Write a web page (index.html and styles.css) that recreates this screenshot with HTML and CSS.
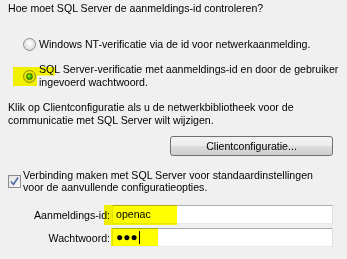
FILE: index.html
```html
<!DOCTYPE html>
<html lang="nl">

<head>
    <meta charset="UTF-8">
    <title>SQL Server aanmelding</title>
    <link rel="stylesheet" href="styles.css">
</head>

<body>

    <div class="dialog">
        <p class="question">Hoe moet SQL Server de aanmeldings-id controleren?</p>

        <div class="options">
            <label class="option">
                <span class="radio"></span>
                <span class="option-text">Windows NT-verificatie via de id voor netwerkaanmelding.</span>
            </label>
            <label class="option option-two">
                <span class="radio checked"></span>
                <span class="option-text">SQL Server-verificatie met aanmeldings-id en door de gebruiker ingevoerd wachtwoord.</span>
            </label>
        </div>

        <p class="info">Klik op Clientconfiguratie als u de netwerkbibliotheek voor de communicatie met SQL Server wilt wijzigen.</p>

        <div class="button-row">
            <button class="button">Clientconfiguratie...</button>
        </div>

        <label class="check-row">
            <span class="checkbox">
                <svg width="11" height="11" viewBox="0 0 11 11">
                    <path d="M2 5.5 L4.5 8.5 L9 1.5" fill="none" stroke="#4d6aa8" stroke-width="1.6" />
                </svg>
            </span>
            <span class="check-text">Verbinding maken met SQL Server voor standaardinstellingen voor de aanvullende configuratieopties.</span>
        </label>

        <div class="fields">
            <span class="field-label">Aanmeldings-id:</span>
            <div class="field">openac</div>
            <span class="field-label">Wachtwoord:</span>
            <div class="field password">&#9679;&#9679;&#9679;<span class="caret"></span></div>
        </div>

        <!-- highlighter marks -->
        <div class="mark mark-radio"></div>
        <div class="mark mark-login"></div>
        <div class="mark mark-password"></div>
    </div>

</body>

</html>
```

FILE: styles.css
```css
body {
    margin: 0;
    background: #f0f0f0;
    font-family: "Liberation Sans", Arial, sans-serif;
    font-size: 10.6px;
    color: #000;
}

.dialog {
    position: relative;
    width: 347px;
    height: 259px;
    box-sizing: border-box;
    padding: 2px 14px 0 8px;
}

p {
    margin: 0;
}

.question {
    line-height: 13px;
}

.options {
    margin-top: 23px;
    margin-right: -10px;
    padding-left: 15px;
}

.option {
    display: flex;
    align-items: center;
    line-height: 13px;
}

.option-two {
    margin-top: 12px;
}

.option-text {
    margin-left: 3px;
}

.radio {
    flex: none;
    width: 11px;
    height: 11px;
    border: 1px solid #8c8c8c;
    border-radius: 50%;
    background: radial-gradient(circle at 50% 40%, #ffffff 0%, #e6e6e6 55%, #cfcfcf 100%);
    display: flex;
    align-items: center;
    justify-content: center;
}

.radio.checked::after {
    content: "";
    width: 5px;
    height: 5px;
    border-radius: 50%;
    border: 1px solid #1f6b12;
    background: radial-gradient(circle at 40% 35%, #b6f58d 0%, #3eb41e 55%, #1b7a0b 100%);
}

.info {
    margin-top: 12px;
    line-height: 12.5px;
}

.button-row {
    display: flex;
    justify-content: flex-end;
    margin-top: 10px;
}

.button {
    width: 163px;
    height: 20px;
    border: 1px solid #707070;
    border-radius: 3px;
    background: linear-gradient(#f2f2f2 0%, #ebebeb 50%, #dddddd 50%, #cfcfcf 100%);
    font-family: inherit;
    font-size: 10.6px;
    color: #000;
    padding: 0;
}

.check-row {
    display: flex;
    align-items: center;
    margin-top: 13px;
    line-height: 12px;
}

.checkbox {
    flex: none;
    width: 11px;
    height: 11px;
    border: 1px solid #8c8c8c;
    background: linear-gradient(135deg, #e4e4e4, #f8f8f8);
    display: flex;
    align-items: center;
    justify-content: center;
}

.check-text {
    margin-left: 2px;
}

.fields {
    display: grid;
    grid-template-columns: 102px 1fr;
    column-gap: 2px;
    row-gap: 4px;
    margin-top: 12px;
    align-items: center;
}

.field-label {
    text-align: right;
}

.field {
    height: 17px;
    line-height: 17px;
    border: 1px solid #abadb3;
    border-left-color: #e2e3ea;
    border-right-color: #dbdfe6;
    border-bottom-color: #e3e9ef;
    background: #fff;
    padding-left: 3px;
}

.password {
    display: flex;
    align-items: center;
    font-size: 12px;
    letter-spacing: 0;
}

.caret {
    width: 1px;
    height: 13px;
    margin-left: 1px;
    background: #000;
}

.mark {
    position: absolute;
    background: #ffff00;
    mix-blend-mode: multiply;
}

.mark-radio {
    left: 13px;
    top: 67px;
    width: 42px;
    height: 19px;
    clip-path: polygon(0 0, 100% 0, 100% 45%, 57% 45%, 57% 100%, 0 100%);
}

.mark-login {
    left: 104px;
    top: 205px;
    width: 73px;
    height: 20px;
}

.mark-password {
    left: 111px;
    top: 228px;
    width: 47px;
    height: 18px;
}
```
